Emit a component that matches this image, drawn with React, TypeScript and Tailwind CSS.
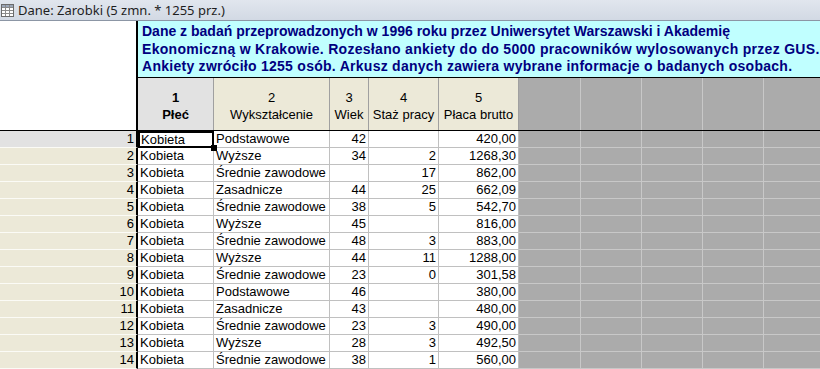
import React from "react";

type Row = [string, string, string, string, string];

const rows: Row[] = [
  ["Kobieta", "Podstawowe", "42", "", "420,00"],
  ["Kobieta", "Wyższe", "34", "2", "1268,30"],
  ["Kobieta", "Średnie zawodowe", "", "17", "862,00"],
  ["Kobieta", "Zasadnicze", "44", "25", "662,09"],
  ["Kobieta", "Średnie zawodowe", "38", "5", "542,70"],
  ["Kobieta", "Wyższe", "45", "", "816,00"],
  ["Kobieta", "Średnie zawodowe", "48", "3", "883,00"],
  ["Kobieta", "Wyższe", "44", "11", "1288,00"],
  ["Kobieta", "Średnie zawodowe", "23", "0", "301,58"],
  ["Kobieta", "Podstawowe", "46", "", "380,00"],
  ["Kobieta", "Zasadnicze", "43", "", "480,00"],
  ["Kobieta", "Średnie zawodowe", "23", "3", "490,00"],
  ["Kobieta", "Wyższe", "28", "3", "492,50"],
  ["Kobieta", "Średnie zawodowe", "38", "1", "560,00"],
];

function GreyCols() {
  return (
    <div className="flex flex-1 h-full bg-[#ababab] overflow-hidden">
      <div className="w-[62px] shrink-0 h-full border-r border-[#c8c8c8]" />
      <div className="w-[61px] shrink-0 h-full border-r border-[#c8c8c8]" />
      <div className="w-[61px] shrink-0 h-full border-r border-[#c8c8c8]" />
      <div className="w-[61px] shrink-0 h-full border-r border-[#c8c8c8]" />
      <div className="w-[61px] shrink-0 h-full border-r border-[#c8c8c8]" />
    </div>
  );
}

function TableIcon() {
  return (
    <svg width="13" height="13" viewBox="0 0 13 13" className="shrink-0">
      <rect x="0.5" y="0.5" width="12" height="12" fill="#ffffff" stroke="#6b6b6b" />
      <rect x="1" y="1" width="11" height="2" fill="#9aa6b8" />
      <line x1="4.5" y1="1" x2="4.5" y2="12" stroke="#8a8a8a" />
      <line x1="8.5" y1="1" x2="8.5" y2="12" stroke="#8a8a8a" />
      <line x1="1" y1="3.5" x2="12" y2="3.5" stroke="#8a8a8a" />
      <line x1="1" y1="6.5" x2="12" y2="6.5" stroke="#8a8a8a" />
      <line x1="1" y1="9.5" x2="12" y2="9.5" stroke="#8a8a8a" />
    </svg>
  );
}

export default function App() {
  return (
    <div
      className="w-[820px] h-[369px] overflow-hidden bg-white flex flex-col text-black"
      style={{ fontFamily: '"Liberation Sans", Arial, sans-serif' }}
    >
      {/* Title bar */}
      <div className="h-[21px] shrink-0 flex items-center gap-[4px] pl-[1px] bg-gradient-to-b from-[#e1e6ee] to-[#d2d9e4] border-b border-[#8c96a5]">
        <TableIcon />
        <span
          className="text-[13px] leading-none text-[#1e1e1e] whitespace-nowrap"
          style={{ fontFamily: '"Noto Sans", "Open Sans", sans-serif' }}
        >
          Dane: Zarobki (5 zmn. * 1255 prz.)
        </span>
      </div>

      {/* Header section */}
      <div className="flex shrink-0 border-b border-black">
        <div className="w-[138px] shrink-0 bg-white border-r-2 border-black" />
        <div className="flex-1 flex flex-col min-w-0">
          <div className="h-[57px] bg-[#c0ffff] border-b border-black pl-[4px] pt-[2px] overflow-hidden">
            <div className="text-[14px] font-bold leading-[17.5px] text-[#000080] whitespace-nowrap">
              <div>Dane z badań przeprowadzonych w 1996 roku przez Uniwersytet Warszawski i Akademię</div>
              <div className="tracking-[0.3px]">
                Ekonomiczną w Krakowie. Rozesłano ankiety do do 5000 pracowników wylosowanych przez GUS.
              </div>
              <div className="tracking-[0.27px]">
                Ankiety zwróciło 1255 osób. Arkusz danych zawiera wybrane informacje o badanych osobach.
              </div>
            </div>
          </div>
          <div className="h-[52px] flex text-[13px] leading-[17px]">
            <div className="w-[76px] shrink-0 bg-[#e2e2e2] border-r border-[#a0a0a0] flex flex-col items-center justify-center pt-[4px] font-bold">
              <div>1</div>
              <div>Płeć</div>
            </div>
            <div className="w-[116px] shrink-0 bg-[#ece9d8] border-r border-[#a0a0a0] flex flex-col items-center justify-center pt-[4px]">
              <div>2</div>
              <div>Wykształcenie</div>
            </div>
            <div className="w-[39px] shrink-0 bg-[#ece9d8] border-r border-[#a0a0a0] flex flex-col items-center justify-center pt-[4px]">
              <div>3</div>
              <div>Wiek</div>
            </div>
            <div className="w-[70px] shrink-0 bg-[#ece9d8] border-r border-[#a0a0a0] flex flex-col items-center justify-center pt-[4px] whitespace-nowrap">
              <div>4</div>
              <div>Staż pracy</div>
            </div>
            <div className="w-[80px] shrink-0 bg-[#ece9d8] border-r border-[#a0a0a0] flex flex-col items-center justify-center pt-[4px] whitespace-nowrap">
              <div>5</div>
              <div>Płaca brutto</div>
            </div>
            <GreyCols />
          </div>
        </div>
      </div>

      {/* Data rows */}
      <div className="flex flex-col text-[13px] leading-[16px]">
        {rows.map((r, i) => (
          <div key={i} className="h-[17px] shrink-0 flex">
            <div
              className={`w-[138px] shrink-0 border-r-2 border-r-black border-b border-b-[#fbfbf6] text-right pr-[2px] ${
                i === 0 ? "bg-[#e2e2e2]" : "bg-[#ece9d8]"
              }`}
            >
              {i + 1}
            </div>
            {i === 0 ? (
              <div className="w-[76px] h-[17px] shrink-0 relative whitespace-nowrap bg-white">
                <div className="w-full h-full border-[2px] border-solid border-[#000000] pl-[1px] leading-[13px]">
                  {r[0]}
                </div>
                <div className="absolute right-[-3px] bottom-[-3px] w-[6px] h-[6px] bg-black z-10" />
              </div>
            ) : (
              <div className="w-[76px] shrink-0 border-r border-b border-[#c0c0c0] pl-[2px] whitespace-nowrap">
                {r[0]}
              </div>
            )}
            <div className="w-[116px] shrink-0 border-r border-b border-[#c0c0c0] pl-[2px] whitespace-nowrap overflow-hidden">
              {r[1]}
            </div>
            <div className="w-[39px] shrink-0 border-r border-b border-[#c0c0c0] text-right pr-[2px]">
              {r[2]}
            </div>
            <div className="w-[70px] shrink-0 border-r border-b border-[#c0c0c0] text-right pr-[2px]">
              {r[3]}
            </div>
            <div className="w-[80px] shrink-0 border-r border-b border-[#c0c0c0] text-right pr-[2px]">
              {r[4]}
            </div>
            <div className="flex-1 h-full border-b border-[#c8c8c8] bg-[#ababab] overflow-hidden">
              <GreyCols />
            </div>
          </div>
        ))}
      </div>
    </div>
  );
}
